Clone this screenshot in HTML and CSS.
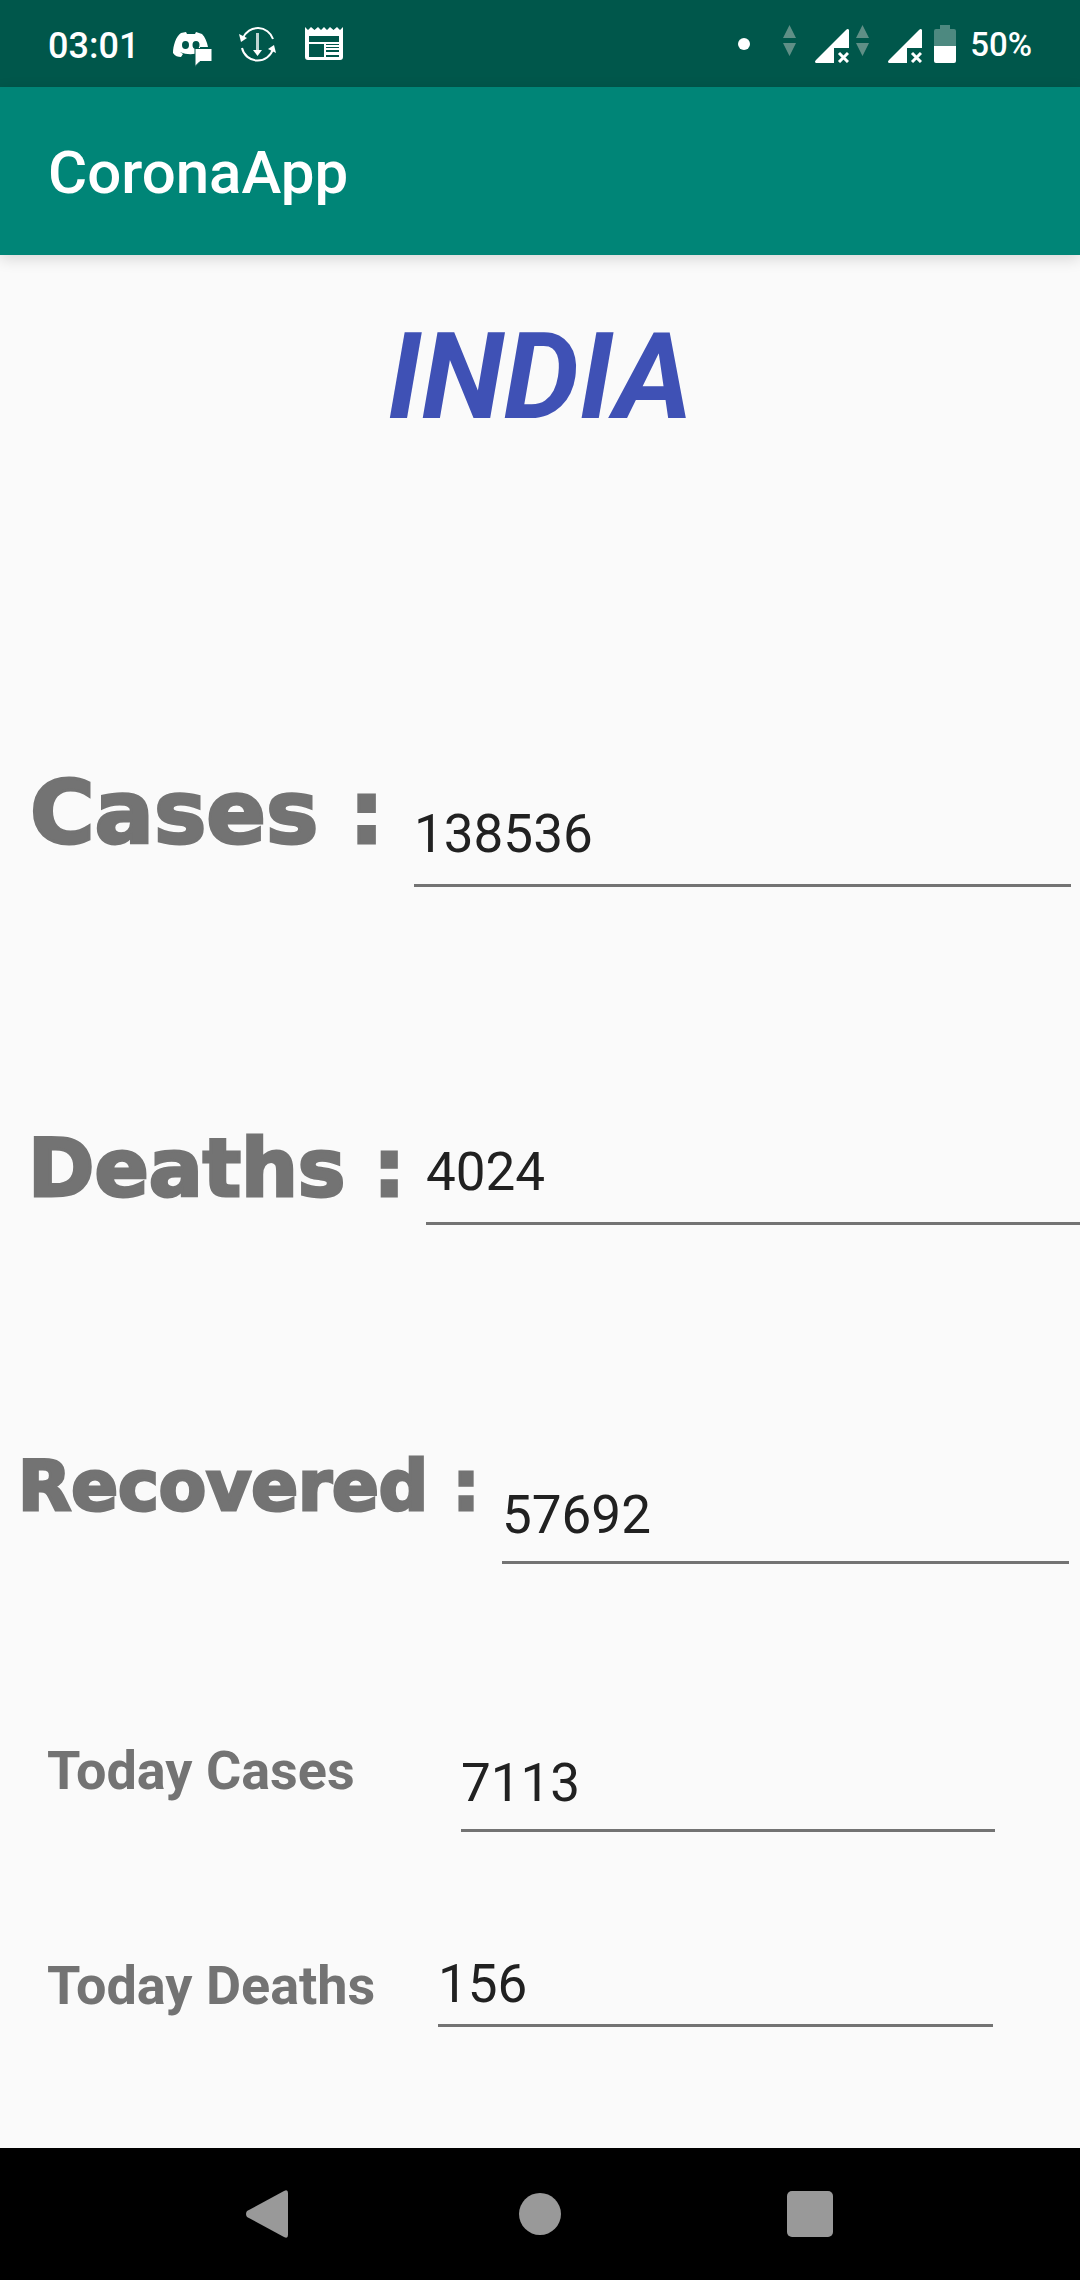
FILE: index.html
```html
<!DOCTYPE html>
<html lang="en">
<head>
<meta charset="utf-8">
<meta name="viewport" content="width=device-width, initial-scale=1">
<title>CoronaApp</title>
<link rel="stylesheet" href="styles.css">
</head>
<body>
<div class="status-bar">
  <div class="status-left">
    <span class="clock">03:01</span>
    <svg class="notification" viewBox="0 -5 38 38" aria-hidden="true">
      <path fill="#fff" fill-rule="evenodd" d="M13 2 8 3C3 6 0 16 0 23c2 3 5 4 8 4l2-3-3-2c7 3 14 3 20 0V17h8C34 12 32 7 29 4l-6-2-1 2h-8zM12.500 11a3.500 4 0 1 0 0 8 3.500 4 0 1 0 0-8zm10.500 0a3.500 4 0 1 0 0 8 3.500 4 0 1 0 0-8z"/>
      <path fill="#fff" stroke="#00574b" d="M22 18.500h17v13H27l-5 5z"/>
    </svg>
    <svg class="notification" viewBox="0 0 38 38" aria-hidden="true">
      <g fill="none" stroke="#fff" stroke-width="2"><path d="M4 13A16 16 0 0 1 34 14M3 23a16 16 0 0 0 31 1"/><path stroke-opacity=".75" stroke-width="3" d="M18.500 8v21"/></g>
      <path fill="#fff" d="M0 9l2 8 6-4zM37 28l-2-8-6 4zM14 25h9l-4.500 6z"/>
    </svg>
    <svg class="notification" viewBox="0 0 38 38" aria-hidden="true">
      <path fill="#fff" fill-rule="evenodd" d="M0 2l3 3 3-3 3.500 3L13 2l3 3 3-3 3 3 3-3 3.500 3L32 2l3 3 3-3v30q0 3-3 3H3q-3 0-3-3zM4 11v6h30v-6zM4 19v13h15V19zM21 19v1h13v-1zm0 3v1h13v-1zm0 3v2h13v-2zm0 5v2h13v-2z"/>
    </svg>
  </div>
  <div class="status-right">
    <span class="dot"></span>
    <svg class="signal" viewBox="0 0 66 38" aria-hidden="true">
      <path fill="#5f8f86" d="M0 13 6.500 0 13 13zM0 18h13L6.500 31z"/>
      <path fill="#fff" d="M66 5v18H51v15H33q-2-1 0-3L63 5q2-2 3 0z"/>
      <path stroke="#fff" stroke-width="3" d="M56 28l9 9m0-9-9 9"/>
    </svg>
    <svg class="signal" viewBox="0 0 66 38" aria-hidden="true">
      <path fill="#5f8f86" d="M0 13 6.500 0 13 13zM0 18h13L6.500 31z"/>
      <path fill="#fff" d="M66 5v18H51v15H33q-2-1 0-3L63 5q2-2 3 0z"/>
      <path stroke="#fff" stroke-width="3" d="M56 28l9 9m0-9-9 9"/>
    </svg>
    <svg class="battery" viewBox="0 0 22 38" aria-hidden="true">
      <path fill="#4d8980" d="M6 0h10v4h4q2 0 2 2v15H0V6q0-2 2-2h4z"/>
      <path fill="#fff" d="M0 21h22v15q0 2-2 2H2q-2 0-2-2z"/>
    </svg>
    <span class="percent">50%</span>
  </div>
</div>
<header class="app-bar"><h1 class="app-title">CoronaApp</h1></header>
<main class="content">
  <h2 class="country">INDIA</h2>
  <form class="stats">
    <div class="row cases"><label for="cases">Cases :</label><input id="cases" type="text" value="138536"></div>
    <div class="row deaths"><label for="deaths">Deaths :</label><input id="deaths" type="text" value="4024"></div>
    <div class="row recovered"><label for="recovered">Recovered :</label><input id="recovered" type="text" value="57692"></div>
    <div class="row today-cases"><label for="today-cases">Today Cases</label><input id="today-cases" type="text" value="7113"></div>
    <div class="row today-deaths"><label for="today-deaths">Today Deaths</label><input id="today-deaths" type="text" value="156"></div>
  </form>
</main>
<nav class="nav-bar">
  <button type="button" aria-label="Back"><svg viewBox="0 0 48 48"><path fill="#999" d="M1 21 38 1q4-2 4 2v42q0 4-4 2L1 27q-2-3 0-6z"/></svg></button>
  <button type="button" aria-label="Home"><svg viewBox="0 0 48 48"><circle fill="#999" cx="24" cy="24" r="21"/></svg></button>
  <button type="button" aria-label="Recent apps"><svg viewBox="0 0 48 48"><rect fill="#999" x="1" y="1" width="46" height="46" rx="5"/></svg></button>
</nav>
</body>
</html>
```

FILE: styles.css
```css
* { box-sizing: border-box; }
body {
  margin: 0;
  min-height: 100vh;
  display: flex;
  flex-direction: column;
  overflow-x: hidden;
  background: #fafafa;
  font-family: Roboto, sans-serif;
}
.status-bar {
  height: 87px;
  padding: 0 48px;
  display: flex;
  justify-content: space-between;
  align-items: center;
  background: #00574b;
  color: #fff;
  font-weight: 500;
}
.status-left, .status-right { display: flex; align-items: center; }
.status-left { gap: 28px; }
.clock { font-size: 36px; line-height: 42px; margin-right: 6px; padding-top: 4px; }
.notification { width: 38px; height: 38px; overflow: visible; }
.dot { width: 12px; height: 12px; border-radius: 50%; background: #fff; margin-right: 33px; }
.signal { width: 66px; height: 38px; margin-right: 7px; }
.signal + .battery { margin-left: 5px; }
.battery { width: 22px; height: 38px; margin-right: 14px; }
.percent { font-size: 33px; line-height: 40px; padding-top: 3px; }
.app-bar {
  height: 168px;
  padding: 4px 48px 0;
  display: flex;
  align-items: center;
  background: #008577;
  color: #fff;
  box-shadow: 0 4px 14px rgba(0, 0, 0, .14);
}
.app-title { margin: 0; font-size: 60px; line-height: 70px; font-weight: 500; }
.content { flex: 1; padding-top: 52px; }
.country {
  margin: 0 0 316px;
  font-size: 120px;
  line-height: 140px;
  font-style: italic;
  font-weight: 700;
  text-align: center;
  color: #3f51b5;
}
.row { display: flex; align-items: flex-end; min-height: 124px; }
label { flex: none; color: #737373; white-space: nowrap; }
input {
  flex: 1;
  min-width: 0;
  height: 85px;
  padding: 0 0 18px;
  border: 0;
  border-bottom: 3px solid #737373;
  border-radius: 0;
  background: none;
  outline: 0;
  color: #212121;
  font: 53px/64px Roboto, sans-serif;
}
.cases label, .deaths label, .recovered label {
  font-family: "DejaVu Sans", sans-serif;
  font-weight: 700;
  -webkit-text-stroke: 3px #737373;
}
.cases { padding: 0 9px 0 30px; }
.cases label { width: 384px; font-size: 88px; line-height: 100px; margin-bottom: 24px; }
.deaths { margin-top: 214px; padding-left: 28px; }
.deaths label { width: 398px; font-size: 80px; line-height: 96px; margin-bottom: 8px; }
.recovered { margin-top: 215px; padding: 0 11px 0 18px; }
.recovered label { width: 484px; font-size: 69px; line-height: 84px; margin-bottom: 36px; }
.recovered input, .today-cases input { height: 81px; padding-bottom: 14px; }
.today-cases label, .today-deaths label { font-size: 54px; line-height: 64px; font-weight: 700; }
.today-cases { margin-top: 144px; padding: 0 85px 0 47px; }
.today-cases label { width: 414px; margin-bottom: 29px; }
.today-deaths { margin-top: 71px; padding: 0 87px 0 47px; }
.today-deaths label { width: 391px; margin-bottom: 9px; }
.today-deaths input { height: 75px; padding-bottom: 8px; }
.nav-bar {
  height: 132px;
  padding: 0 12.5%;
  display: flex;
  background: #000;
}
.nav-bar button {
  flex: 1;
  display: flex;
  align-items: center;
  justify-content: center;
  padding: 0;
  border: 0;
  background: none;
}
.nav-bar svg { width: 48px; height: 48px; }
```
